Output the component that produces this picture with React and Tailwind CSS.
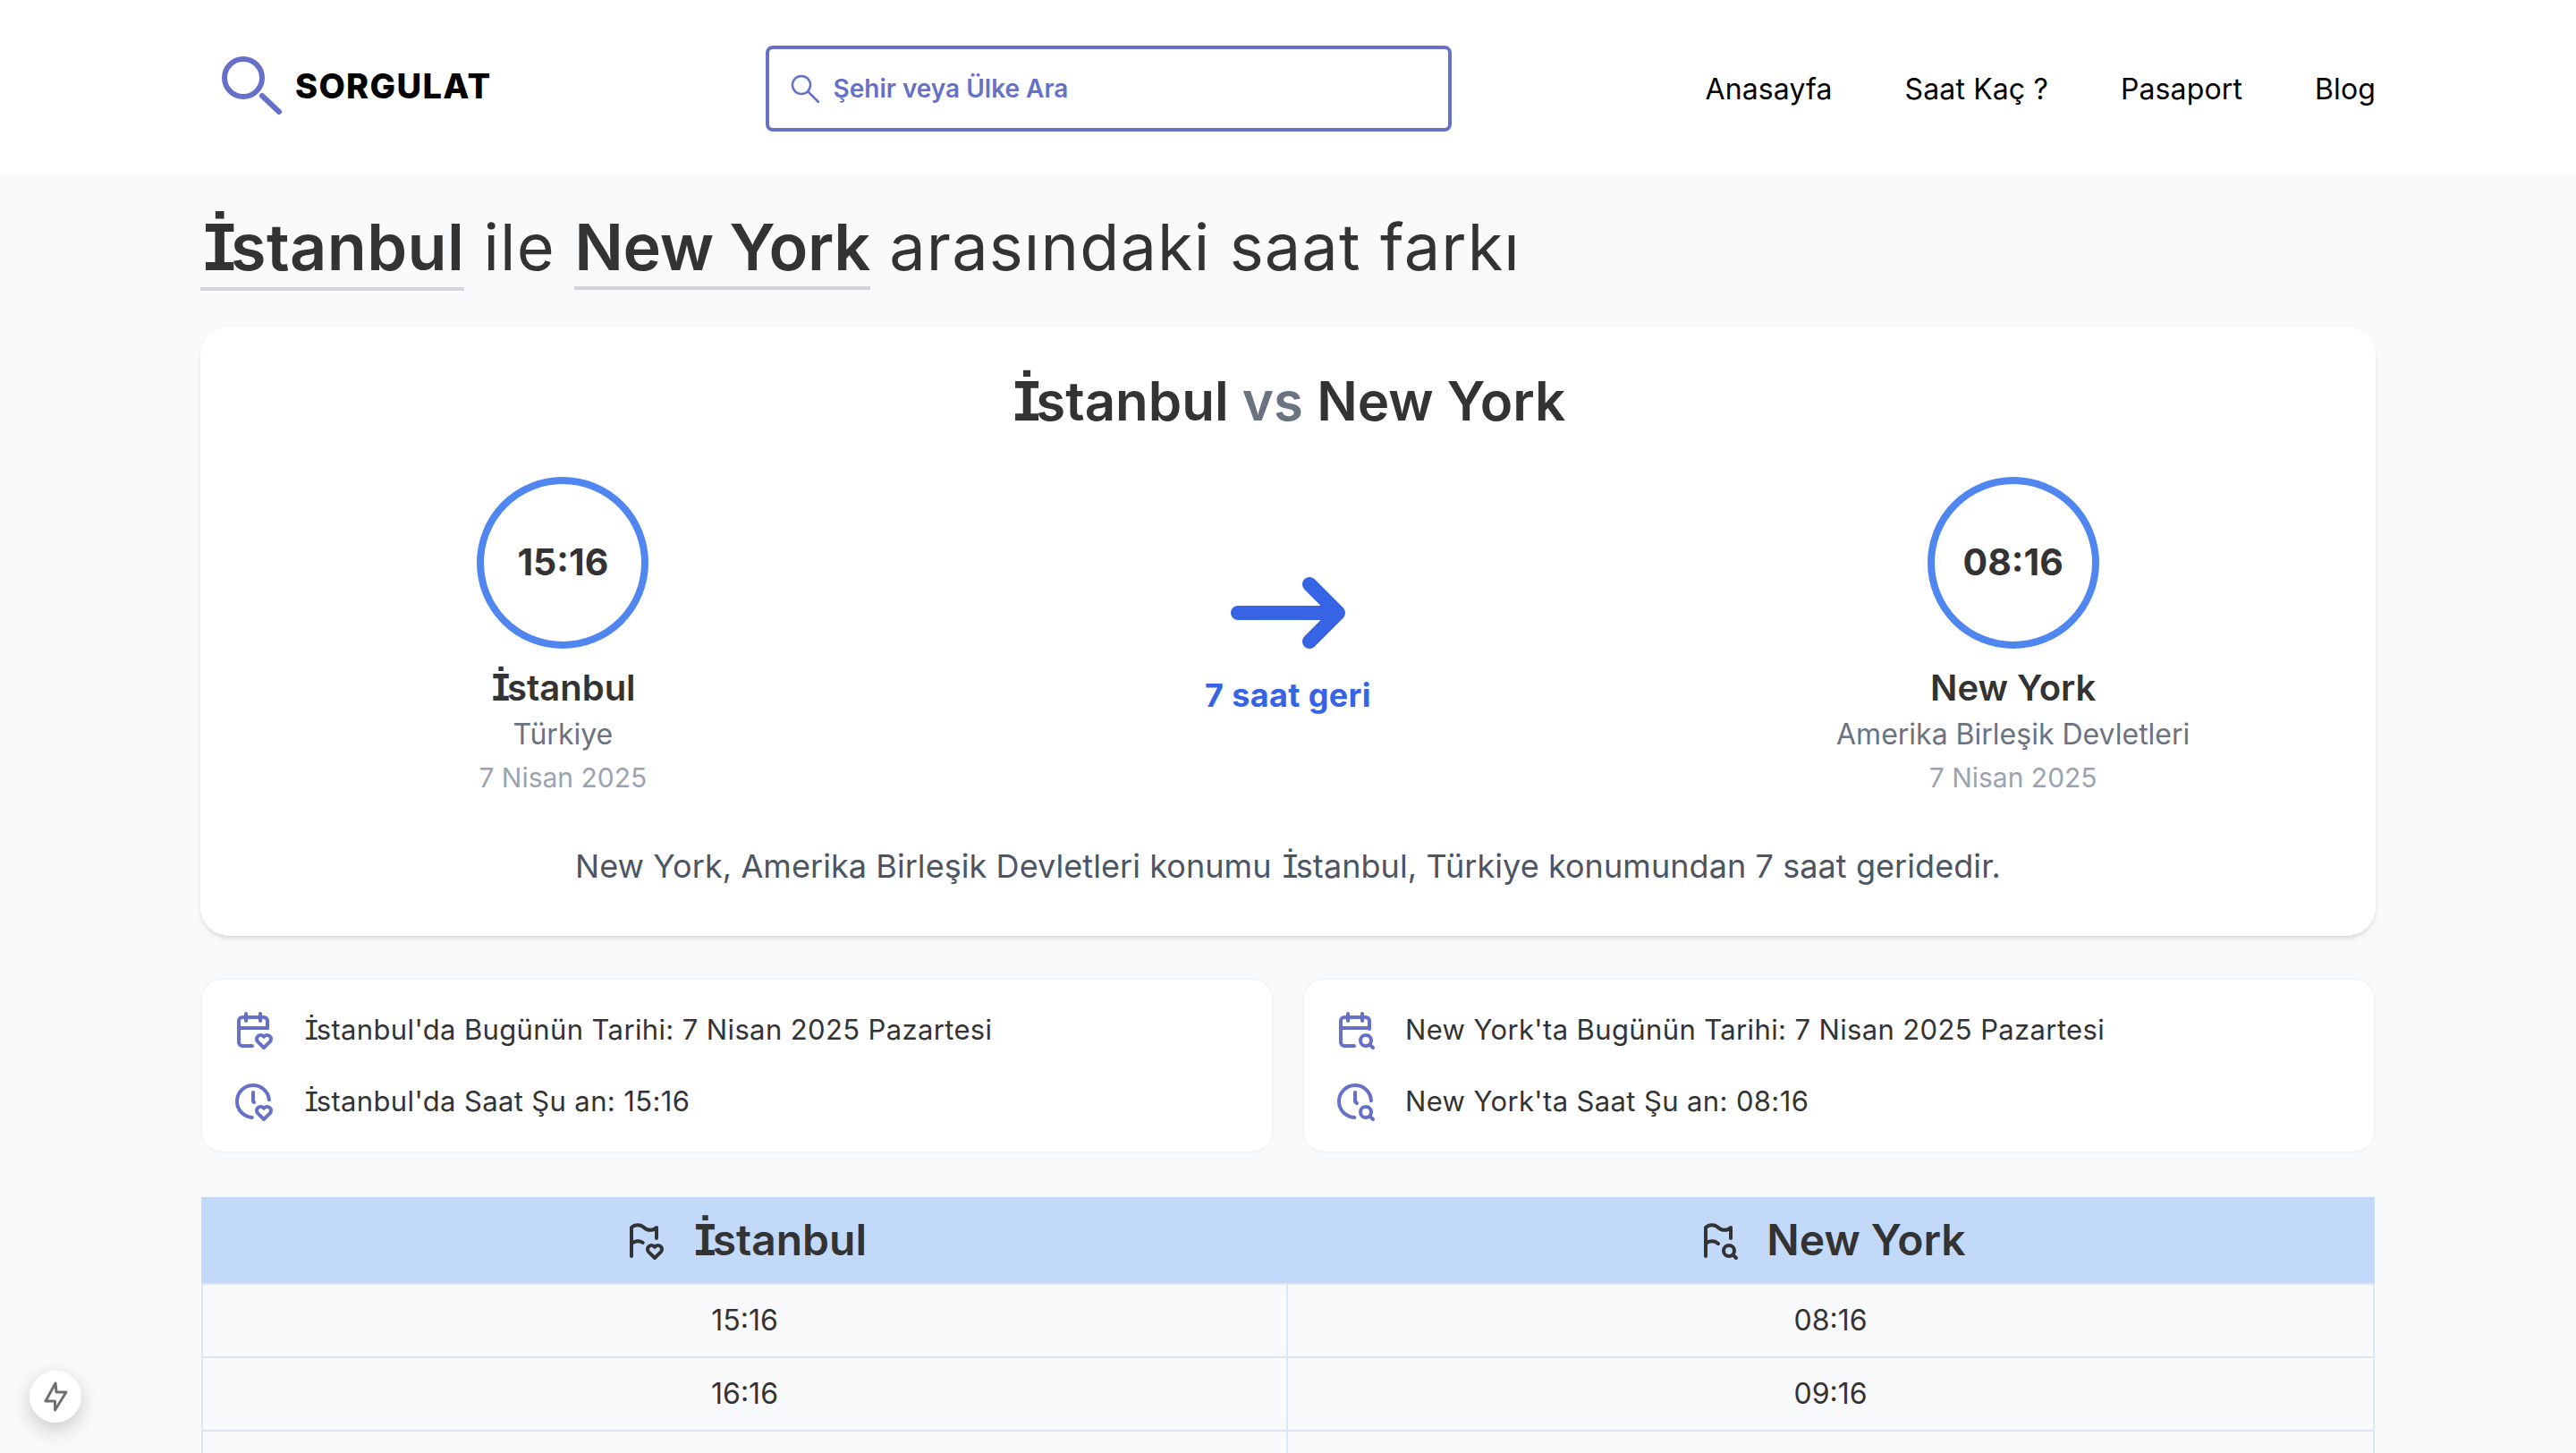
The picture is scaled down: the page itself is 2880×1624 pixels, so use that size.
import { TbCalendarHeart, TbClockHeart, TbCalendarSearch, TbClockSearch, TbFlagHeart, TbFlagSearch } from "react-icons/tb";

// the dotted capital falls back to a slab shape in the reference
const I = () => <span className="font-['DejaVu_Sans_Mono'] tracking-[-0.13em]">İ</span>;

const NavItems = ["Anasayfa", "Saat Kaç ?", "Pasaport", "Blog"];

const Rows = [
  ["15:16", "08:16"],
  ["16:16", "09:16"],
  ["", ""],
];

const CityColumn = ({ time, name, country, date }) => (
  <div className="flex flex-col items-center">
    <div className="w-[192px] h-[192px] rounded-full border-[8px] border-[#4f86f0] flex items-center justify-center text-[41px] font-bold text-[#333]">
      {time}
    </div>
    <div className="mt-[16px] text-[40px] leading-[56px] font-semibold text-[#333]">{name}</div>
    <div className="text-[32px] leading-[48px] text-[#6b7280]">{country}</div>
    <div className="text-[30px] leading-[48px] text-[#9ca3af]">{date}</div>
  </div>
);

const InfoCard = ({ rows }) => (
  <div className="flex-1 bg-white rounded-[24px] border-2 border-[#f3f4f6] px-[33px] py-[32px] flex flex-col gap-[32px]">
    {rows.map((row, index) => (
      <div key={index} className="flex items-center gap-[32px] h-[48px]">
        <row.icon className="w-[48px] h-[48px] text-[#6670c8]" />
        <span className="text-[31px] text-[#333] tracking-[0.012em]">{row.text}</span>
      </div>
    ))}
  </div>
);

export default function App() {
  return (
    <div className="relative h-screen overflow-hidden bg-[#f9fafb] font-['Inter',sans-serif]">
      {/* Header */}
      <header className="bg-white h-[196px]">
        <div className="w-[2432px] mx-auto flex items-center h-full pt-[4px]">
          <div className="flex items-center ml-[22px] -mt-[8px]">
            <svg width="72" height="80" viewBox="0 0 72 80" fill="none" stroke="#6670c8" strokeLinecap="round">
              <circle cx="26" cy="31" r="21" strokeWidth="6" />
              <path d="M47 51 L66 69" strokeWidth="6" />
            </svg>
            <span className="ml-[12px] text-[38px] font-extrabold text-black tracking-[0.035em]">SORGULAT</span>
          </div>
          <div className="ml-[306px] -mt-[3px] w-[767px] h-[96px] border-[4px] border-[#6670c8] rounded-[8px] flex items-center pl-[24px] gap-[16px]">
            <svg width="32" height="32" viewBox="0 0 32 32" fill="none" stroke="#6670c8" strokeWidth="2.5" strokeLinecap="round">
              <circle cx="12" cy="12" r="10" />
              <path d="M20 20 L31 31" />
            </svg>
            <span className="text-[28px] font-semibold text-[#6670c8]">Şehir veya Ülke Ara</span>
          </div>
          <nav className="ml-auto flex items-center gap-[81px] text-[32px] tracking-[0.004em] text-black">
            {NavItems.map((item) => (
              <a key={item}>{item}</a>
            ))}
          </nav>
        </div>
      </header>

      <main className="w-[2432px] mx-auto">
        {/* Title */}
        <h1 className="mt-[36px] text-[72px] leading-[88px] text-[#333] tracking-[0.016em]">
          <span className="font-semibold border-b-4 border-[#d1d5db] inline-block tracking-[0.005em]"><I />stanbul</span>
          {" ile "}
          <span className="font-semibold border-b-4 border-[#d1d5db] inline-block tracking-[-0.005em]">New York</span>
          {" arasındaki saat farkı"}
        </h1>

        {/* Comparison card */}
        <section className="mt-[41px] bg-white rounded-[32px] shadow-md h-[680px] flex flex-col items-center pt-[48px]">
          <h2 className="text-[60px] leading-[68px] font-semibold text-[#333]">
            <I />stanbul <span className="text-[#6b7280]">vs</span> New York
          </h2>
          <div className="w-full mt-[50px] grid grid-cols-3">
            <CityColumn time="15:16" name={<><I />stanbul</>} country="Türkiye" date="7 Nisan 2025" />
            <div className="flex flex-col items-center pt-[112px]">
              <svg width="128" height="80" viewBox="0 0 128 80" fill="none" stroke="#3763e5" strokeWidth="16" strokeLinecap="round" strokeLinejoin="round">
                <path d="M8 40 H118 M88 8 L120 40 L88 72" />
              </svg>
              <span className="mt-[25px] text-[36px] font-bold text-[#3763e5] tracking-[0.01em]">7 saat geri</span>
            </div>
            <CityColumn time="08:16" name="New York" country="Amerika Birleşik Devletleri" date="7 Nisan 2025" />
          </div>
          <p className="mt-[48px] text-[36px] text-[#4b5563] tracking-[0.002em]">
            New York, Amerika Birleşik Devletleri konumu <I />stanbul, Türkiye konumundan 7 saat geridedir.
          </p>
        </section>

        {/* Today cards */}
        <div className="mt-[47px] flex gap-[32px]">
          <InfoCard
            rows={[
              { icon: TbCalendarHeart, text: <><I />stanbul'da Bugünün Tarihi: 7 Nisan 2025 Pazartesi</> },
              { icon: TbClockHeart, text: <><I />stanbul'da Saat Şu an: 15:16</> },
            ]}
          />
          <InfoCard
            rows={[
              { icon: TbCalendarSearch, text: "New York'ta Bugünün Tarihi: 7 Nisan 2025 Pazartesi" },
              { icon: TbClockSearch, text: "New York'ta Saat Şu an: 08:16" },
            ]}
          />
        </div>

        {/* Hours table */}
        <div className="mt-[49px] px-[1px]">
          <div className="grid grid-cols-2 bg-[#c3d9f9] h-[98px] border-b-2 border-[#dde5f7] text-[48px] font-semibold text-[#333]">
            <div className="flex items-center justify-center gap-[30px]">
              <TbFlagHeart className="w-[48px] h-[48px]" />
              <span><I />stanbul</span>
            </div>
            <div className="flex items-center justify-center gap-[30px]">
              <TbFlagSearch className="w-[48px] h-[48px]" />
              <span>New York</span>
            </div>
          </div>
          {Rows.map((row, index) => (
            <div key={index} className="grid grid-cols-2 h-[82px] border-x-2 border-b-2 border-[#dde5f7] text-[32px] text-[#333]">
              <div className="flex items-center justify-center border-r-2 border-[#dde5f7]">{row[0]}</div>
              <div className="flex items-center justify-center">{row[1]}</div>
            </div>
          ))}
        </div>
      </main>

      {/* Dev indicator */}
      <div className="absolute left-[33px] top-[1532px] w-[58px] h-[58px] rounded-full bg-white shadow-[0_8px_24px_rgba(0,0,0,0.2)] flex items-center justify-center">
        <svg width="27" height="34" viewBox="0 0 27 34" fill="none" stroke="#707070" strokeWidth="3" strokeLinejoin="round">
          <path d="M13 2 L2 22 H12.5 V32 L25 12 H14 Z" />
        </svg>
      </div>
    </div>
  );
}
